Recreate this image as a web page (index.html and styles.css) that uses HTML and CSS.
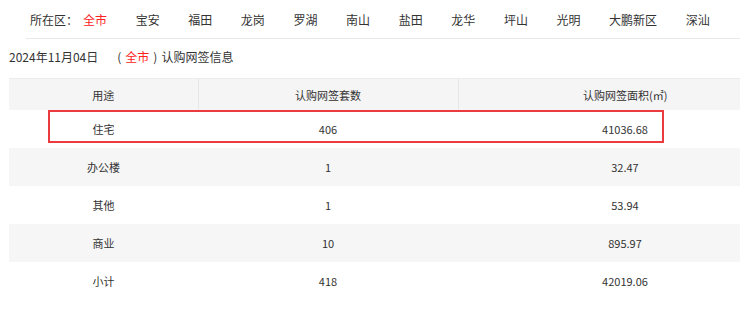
FILE: index.html
```html
<!DOCTYPE html>
<html lang="zh-CN">
<head>
<meta charset="utf-8">
<title>认购网签信息</title>
<link rel="stylesheet" href="styles.css">
</head>
<body>
<div class="page">
  <div class="nav">
    <span class="nav-label">所在区：</span>
    <div class="nav-items">
      <span class="nav-item active">全市</span>
      <span class="nav-item">宝安</span>
      <span class="nav-item">福田</span>
      <span class="nav-item">龙岗</span>
      <span class="nav-item">罗湖</span>
      <span class="nav-item">南山</span>
      <span class="nav-item">盐田</span>
      <span class="nav-item">龙华</span>
      <span class="nav-item">坪山</span>
      <span class="nav-item">光明</span>
      <span class="nav-item">大鹏新区</span>
      <span class="nav-item">深汕</span>
    </div>
  </div>
  <div class="title">2024年11月04日<span class="open">(</span><span class="red">全市</span><span class="close">)</span>认购网签信息</div>
  <div class="table-wrap">
    <table class="data">
      <colgroup>
        <col class="c1"><col class="c2"><col class="c3">
      </colgroup>
      <thead>
        <tr><th>用途</th><th>认购网签套数</th><th>认购网签面积(㎡)</th></tr>
      </thead>
      <tbody>
        <tr><td>住宅</td><td>406</td><td>41036.68</td></tr>
        <tr class="alt"><td>办公楼</td><td>1</td><td>32.47</td></tr>
        <tr><td>其他</td><td>1</td><td>53.94</td></tr>
        <tr class="alt"><td>商业</td><td>10</td><td>895.97</td></tr>
        <tr><td>小计</td><td>418</td><td>42019.06</td></tr>
      </tbody>
    </table>
    <div class="highlight"></div>
  </div>
</div>
</body>
</html>
```
FILE: styles.css
```css
html, body {
  margin: 0;
  padding: 0;
  background: #fff;
  overflow: hidden;
}
body {
  font-family: "Noto Sans CJK SC", "Noto Sans", sans-serif;
  color: #333;
  width: 740px;
}
.page {
  width: 740px;
  overflow: hidden;
}
.nav {
  display: flex;
  align-items: center;
  height: 38px;
  margin-left: 26px;
  padding-left: 4px;
  border-bottom: 1px solid #e8e8e8;
  font-size: 12px;
  color: #333;
}
.nav-label {
  margin-right: 5px;
}
.nav-items {
  display: flex;
  gap: 28.6px;
}
.nav-item.active {
  color: #f22;
}
.title {
  height: 39px;
  line-height: 36px;
  padding-left: 9px;
  font-size: 12px;
  color: #333;
}
.open {
  margin-left: 19px;
}
.red {
  color: #f22;
  margin: 0 4px;
}
.close {
  margin-right: 4px;
}
.table-wrap {
  position: relative;
  margin-left: 9px;
  width: 783px;
}
.data {
  width: 783px;
  table-layout: fixed;
  border-collapse: collapse;
  font-size: 11px;
  color: #333;
}
.c1 { width: 189px; }
.c2 { width: 260px; }
.c3 { width: 334px; }
.data th {
  height: 31px;
  padding: 0;
  font-weight: normal;
  background: #f5f5f5;
  border-left: 1px solid #e6e6e6;
  border-top: 1px solid #ececec;
  text-align: center;
}
.data th:first-child {
  border-left: none;
}
.data td {
  height: 38px;
  padding: 0;
  text-align: center;
}
.data tr.alt td {
  background: #f6f6f6;
}
.highlight {
  position: absolute;
  left: 39px;
  top: 32px;
  width: 612px;
  height: 29px;
  border: 2px solid #ec3b3f;
}
```
